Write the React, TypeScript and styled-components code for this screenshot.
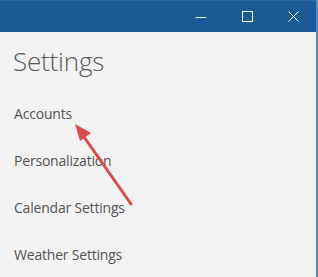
import * as React from 'react'
import styled, { createGlobalStyle } from 'styled-components'

const GlobalStyle = createGlobalStyle`
  html, body {
    margin: 0;
    padding: 0;
    background: #f2f2f2;
  }
`

const Window = styled.div`
  position: relative;
  width: 318px;
  height: 277px;
  box-sizing: border-box;
  border-right: 2px solid #5b88b8;
  background: #f2f2f2;
  overflow: hidden;
  font-family: 'Open Sans', 'Noto Sans', sans-serif;
`

const TitleBar = styled.div`
  display: flex;
  justify-content: flex-end;
  align-items: stretch;
  height: 32px;
  background: #1a5a96;
  border-top: 1px solid #2a68a3;
  box-sizing: border-box;
`

const ControlButton = styled.div`
  width: 46px;
  display: flex;
  align-items: center;
  justify-content: center;
  color: #ffffff;
`

const Content = styled.div`
  display: flex;
  flex-direction: column;
  padding: 9px 0 0 13px;
`

const Heading = styled.h1`
  margin: 0 0 9px;
  font-size: 26px;
  font-weight: 300;
  line-height: 40px;
  color: #5a5a5a;
  letter-spacing: -0.2px;
`

const MenuItem = styled.div`
  height: 47px;
  display: flex;
  align-items: center;
  padding-left: 1px;
  font-size: 14px;
  color: #545454;
  letter-spacing: -0.2px;
`

const Annotation = styled.svg`
  position: absolute;
  left: 0;
  top: 0;
  pointer-events: none;
`

const items = ['Accounts', 'Personalization', 'Calendar Settings', 'Weather Settings']

export default function App() {
  return (
    <>
      <GlobalStyle />
      <Window>
        <TitleBar>
          <ControlButton>
            <svg width="12" height="12" viewBox="0 0 12 12">
              <line x1="0.5" y1="6.5" x2="11.5" y2="6.5" stroke="#fff" strokeWidth="1" />
            </svg>
          </ControlButton>
          <ControlButton>
            <svg width="11" height="11" viewBox="0 0 11 11">
              <rect x="0.5" y="0.5" width="10" height="10" fill="none" stroke="#fff" strokeWidth="1" />
            </svg>
          </ControlButton>
          <ControlButton>
            <svg width="11" height="11" viewBox="0 0 11 11">
              <path d="M0.5 0.5 L10.5 10.5 M10.5 0.5 L0.5 10.5" stroke="#fff" strokeWidth="1" />
            </svg>
          </ControlButton>
        </TitleBar>
        <Content>
          <Heading>Settings</Heading>
          {items.map((label) => (
            <MenuItem key={label}>{label}</MenuItem>
          ))}
        </Content>
        <Annotation width="318" height="277" viewBox="0 0 318 277">
          <line x1="131" y1="204" x2="82" y2="134" stroke="#dc4b45" strokeWidth="3" strokeLinecap="round" />
          <polygon points="75,124 91,133 80,141" fill="#dc4b45" />
        </Annotation>
      </Window>
    </>
  )
}
